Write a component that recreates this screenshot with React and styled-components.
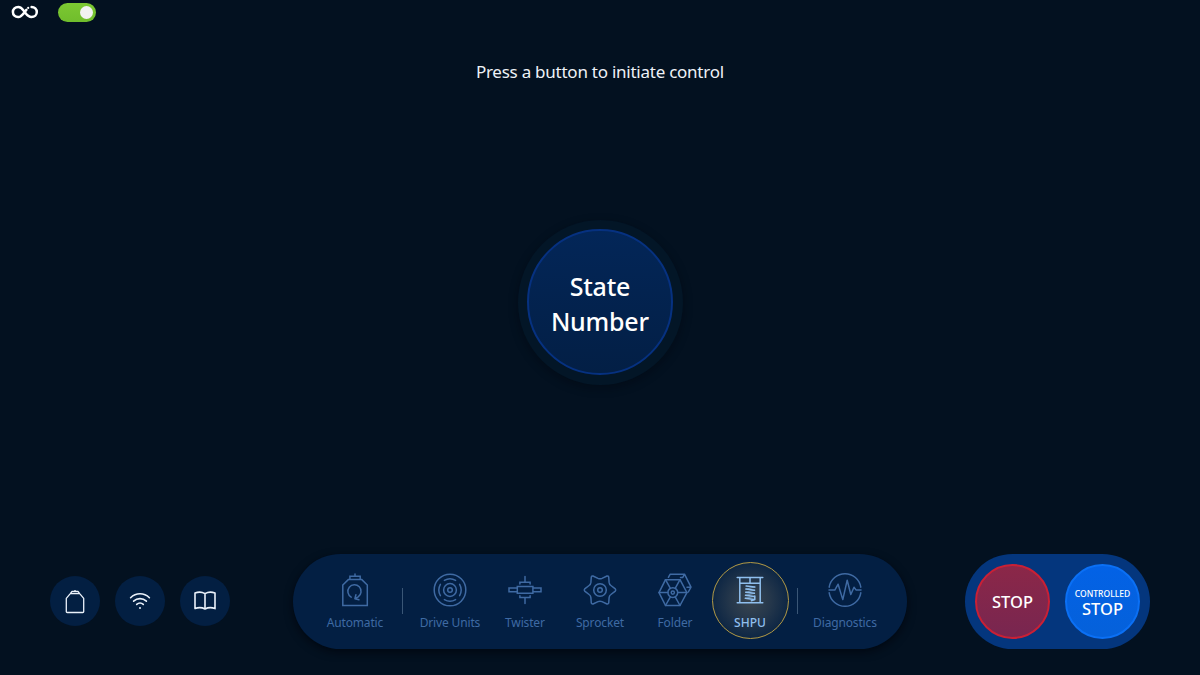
import React from 'react';
import styled, { createGlobalStyle } from 'styled-components';

const GlobalStyle = createGlobalStyle`
  *, *::before, *::after { box-sizing: border-box; }
  body {
    margin: 0;
    background: #031120;
    font-family: "Noto Sans", "Open Sans", sans-serif;
    color: #fff;
    overflow: hidden;
  }
  button { font: inherit; color: inherit; border: 0; padding: 0; margin: 0; background: none; cursor: pointer; }
  svg { display: block; overflow: visible; }
`;

const Screen = styled.div`
  width: 1200px;
  height: 675px;
  display: flex;
  flex-direction: column;
  align-items: center;
`;

const TopBar = styled.header`
  align-self: stretch;
  height: 24px;
  padding-left: 11px;
  display: flex;
  align-items: center;
  gap: 19px;
`;

const Toggle = styled.button`
  width: 38px;
  height: 19px;
  border-radius: 10px;
  background: linear-gradient(#7cc832, #70bd2c);
  display: flex;
  align-items: center;
  justify-content: flex-end;
  padding-right: 3px;
`;

const Knob = styled.span`
  width: 13px;
  height: 13px;
  border-radius: 50%;
  background: #f2f2f2;
`;

const Line = styled.span`
  display: block;
  white-space: nowrap;
  font-size: ${(p) => p.$size}px;
  line-height: ${(p) => p.$height}px;
  font-weight: ${(p) => p.$weight || 400};
  letter-spacing: ${(p) => p.$spacing || 0}px;
  margin-right: ${(p) => -(p.$spacing || 0)}px;
`;

const Prompt = styled.p`
  margin: 36px 0 0;
  height: 24px;
  color: #eef2f7;
`;

const Main = styled.main`
  flex: 1;
  padding-top: 135.5px;
`;

const Halo = styled.div`
  padding: 9.5px;
  border-radius: 50%;
  background: #031627;
  box-shadow: 0 3px 10px rgba(0, 4, 12, 0.4);
`;

const StateButton = styled.button`
  width: 146px;
  height: 146px;
  border-radius: 50%;
  border: 2px solid #063180;
  background: linear-gradient(#032658, #031f45);
  display: flex;
  flex-direction: column;
  align-items: center;
  justify-content: center;
  padding-top: 4px;
`;

const Footer = styled.footer`
  width: 1200px;
  height: 121px;
  padding: 0 50px;
  display: flex;
  align-items: flex-start;
  justify-content: space-between;
`;

const Shortcuts = styled.div`
  display: flex;
  gap: 15px;
  padding-top: 22px;
  width: 180px;
`;

const RoundButton = styled.button`
  width: 50px;
  height: 50px;
  border-radius: 50%;
  background: #031f42;
  display: flex;
  align-items: center;
  justify-content: center;
`;

const Nav = styled.nav`
  width: 614px;
  height: 95px;
  margin-left: 5px;
  padding-bottom: 2px;
  border-radius: 48px;
  background: #031f43;
  box-shadow: 0 3px 8px rgba(0, 4, 12, 0.7);
  display: flex;
  align-items: center;
  justify-content: center;
`;

const NavItem = styled.button`
  width: 75px;
  height: 77px;
  display: flex;
  flex-direction: column;
  align-items: center;
  padding-top: 11.4px;
  color: ${(p) => (p.$active ? '#8fbfee' : '#3f6aa3')};
  ${(p) => p.$active && `
    width: 77px;
    margin: 0 -1px;
    border-radius: 50%;
    border: 1px solid #b39a45;
    padding-top: 10.4px;
    background: radial-gradient(circle at 50% 50%, #3a454f 0%, #25374b 38%, #0d2644 72%);
  `}
`;

const NavLabel = styled.span`
  margin-top: 7.6px;
`;

const Divider = styled.span`
  width: 1px;
  height: 26px;
  margin: 0 10px 0 9px;
  background: #3a5676;
`;

const StopPod = styled.div`
  width: 185px;
  height: 95px;
  padding-bottom: 1px;
  border-radius: 48px;
  background: #04367d;
  display: flex;
  align-items: center;
  justify-content: center;
  gap: 15px;
`;

const StopButton = styled.button`
  width: 75px;
  height: 75px;
  border-radius: 50%;
  border: 2px solid ${(p) => (p.$hard ? '#c92035' : '#0b70f5')};
  background: ${(p) => (p.$hard ? 'linear-gradient(#8b2748, #782650)' : 'linear-gradient(#0362e6, #0561da)')};
  display: flex;
  flex-direction: column;
  align-items: center;
  justify-content: center;
  padding-top: ${(p) => (p.$hard ? 2 : 5)}px;
`;

const Glyph = ({ size = 34, w = 1.5, children }) => (
  <svg width={size} height={size} viewBox="0 0 34 34" fill="none" stroke="currentColor" strokeWidth={w} strokeLinejoin="round" strokeLinecap="round">
    {children}
  </svg>
);

const LogoIcon = () => (
  <svg width="28" height="14" viewBox="0 0 28 14" fill="none" stroke="#fff" strokeWidth="2.5" strokeLinecap="round">
    <path d="M15.4 4.8C12.8 7.6 11 12 7.3 12.1C4.1 12.2 1.9 9.9 1.9 7C1.9 4.1 4.1 1.9 7.3 1.9C10.8 1.9 12 5 14 7.5C15.8 9.9 17.3 12.1 20.4 12.1C23.6 12.1 25.8 9.9 25.8 7C25.8 4.1 23.6 1.9 20.6 1.9" />
    <circle cx="17.2" cy="2.9" r="1.1" fill="#fff" stroke="none" />
  </svg>
);

const BottleIcon = () => (
  <svg width="20" height="25" viewBox="0 0 20 25" fill="none" stroke="#eaf1fa" strokeWidth="1.3" strokeLinejoin="round">
    <path d="M5.3 4.7L1.3 9.4V22.7Q1.3 23.5 2.2 23.5H17.8Q18.7 23.5 18.7 22.7V9.4L14.7 4.7ZM5.3 4.7L7 2.5H13L14.7 4.7M10 1V2.5" />
  </svg>
);

const WifiIcon = () => (
  <svg width="22" height="18" viewBox="0 0 22 18" fill="none" stroke="#eaf1fa" strokeWidth="1.6" strokeLinecap="round">
    <path d="M1.6 5.7C7 .4 15 .4 20.4 5.7M4.6 9.2C8.3 5.7 13.7 5.7 17.4 9.2M7.7 12.4C9.6 10.6 12.4 10.6 14.3 12.4" />
    <circle cx="11" cy="15.9" r="1" fill="#eaf1fa" stroke="none" />
  </svg>
);

const BookIcon = () => (
  <svg width="22" height="20" viewBox="0 0 22 20" fill="none" stroke="#eaf1fa" strokeWidth="1.6" strokeLinejoin="round">
    <path d="M11 2.6C8 .9 4 .9 1 2.1V17.6C4 16.4 8 16.4 11 18C14 16.4 18 16.4 21 17.6V2.1C18 .9 14 .9 11 2.6ZM11 2.6V18" />
  </svg>
);

const AutomaticIcon = () => (
  <Glyph>
    <path d="M10.3 6.6L4.8 12V32.6H29.3V12L23.8 6.6ZM11.9 6.4V3.3H22.2V6.4M17 1V3.2" strokeLinejoin="miter" />
    <path d="M13.2 24.1A6.6 6.6 0 1 1 20.2 23.8L17.6 25.4M17.9 21.8L16.9 25.7L20.9 26.8" />
  </Glyph>
);

const DriveIcon = () => (
  <Glyph>
    <circle cx="17" cy="17" r="15.8" />
    <circle cx="17" cy="17" r="6.4" />
    <circle cx="17" cy="17" r="2.3" />
    <path d="M11.4 7.4A11.2 11.2 0 0 1 22.6 7.4M11.4 26.6A11.2 11.2 0 0 0 22.6 26.6M7.4 11.4A11.2 11.2 0 0 0 7.4 22.6M26.6 11.4A11.2 11.2 0 0 1 26.6 22.6" />
  </Glyph>
);

const TwisterIcon = () => (
  <Glyph>
    <path d="M9.3 13.4H24.9V20.2H9.3ZM1 14.9H9.3V18.8H1ZM24.9 14.9H33V18.8H24.9ZM17 3.4V9.2M11.9 11V9.2H22.1V11M17 24.6V30.4M11.9 22.8V24.6H22.1V22.8" strokeLinejoin="miter" />
  </Glyph>
);

const SprocketIcon = () => (
  <Glyph>
    <path d="M8.3 3.9Q8.7 2.7 10 3L15 5.4Q17 6.3 19 5.4L24 3Q25.3 2.7 25.7 3.9L26.1 9.4Q26.3 11.4 27.9 12.5L32.3 15.9Q33.2 17 32.3 18.1L27.9 21.5Q26.3 22.6 26.1 24.6L25.7 30.1Q25.3 31.3 24 31L19 28.6Q17 27.7 15 28.6L10 31Q8.7 31.3 8.3 30.1L7.9 24.6Q7.7 22.6 6.1 21.5L1.7 18.1Q.8 17 1.7 15.9L6.1 12.5Q7.7 11.4 7.9 9.4Z" />
    <circle cx="17" cy="17" r="6.3" />
    <circle cx="17" cy="17" r="2.3" />
  </Glyph>
);

const FolderIcon = () => (
  <Glyph>
    <path d="M7.5 6.7H22L28.9 19.6L22 32.5H7.5L1 19.6Z" />
    <circle cx="14.8" cy="19.6" r="4.9" />
    <circle cx="14.8" cy="19.6" r="1.6" />
    <path d="M7.5 6.7L12.4 15.3M22 6.7L17.2 15.3M1 19.6H9.9M19.7 19.6H28.9M7.5 32.5L12.4 23.9M22 32.5L17.2 23.9M10.4 4.3L12.2 1.2H26.5L33 14.2L30.3 19M26.5 1.2L24.8 4.4M22.5 4.6H24.8M29 14.2H33" />
  </Glyph>
);

const ShpuIcon = () => (
  <Glyph>
    <path d="M4.2 4.4H29.8M4.2 29.8H29.8M6.8 4.4V29.8M27.2 4.4V29.8M6.8 10.2H27.2M17 4.4V10.2" />
    <path d="M13.1 13L21.8 14.1M12.9 16.1L21.6 17.2M12.7 19.2L21.4 20.3M12.5 22.3L21.2 23.4M12.3 25.3L21 26.4M21.8 23V26.6L18.4 27.7" />
    <path d="M21.8 14.1L12.9 16.1M21.6 17.2L12.7 19.2M21.4 20.3L12.5 22.3M21.2 23.4L12.3 25.3" strokeWidth="0.6" />
  </Glyph>
);

const DiagnosticsIcon = () => (
  <Glyph>
    <path d="M1.2 14.2A16 16 0 0 1 32.8 14.2M32.8 19.8A16 16 0 0 1 1.2 19.8" />
    <path d="M1 17.1H6.8L10.1 11.2L14.8 26.6L19.2 7.2L22.8 21.5L26 14.3L28.2 17.1H33" />
  </Glyph>
);

const items = [
  { label: 'Automatic', Icon: AutomaticIcon },
  null,
  { label: 'Drive Units', Icon: DriveIcon },
  { label: 'Twister', Icon: TwisterIcon },
  { label: 'Sprocket', Icon: SprocketIcon },
  { label: 'Folder', Icon: FolderIcon },
  { label: 'SHPU', Icon: ShpuIcon, active: true },
  null,
  { label: 'Diagnostics', Icon: DiagnosticsIcon },
];

export default function App() {
  return (
    <Screen>
      <GlobalStyle />
      <TopBar>
        <LogoIcon />
        <Toggle aria-label="Power"><Knob /></Toggle>
      </TopBar>
      <Prompt><Line $size={17} $height={24} $spacing={-0.25}>Press a button to initiate control</Line></Prompt>
      <Main>
        <Halo>
          <StateButton>
            <Line $size={25} $height={35} $weight={500} $spacing={-0.2}>State</Line>
            <Line $size={25} $height={35} $weight={500} $spacing={-0.2}>Number</Line>
          </StateButton>
        </Halo>
      </Main>
      <Footer>
        <Shortcuts>
          <RoundButton aria-label="Container"><BottleIcon /></RoundButton>
          <RoundButton aria-label="Network"><WifiIcon /></RoundButton>
          <RoundButton aria-label="Manual"><BookIcon /></RoundButton>
        </Shortcuts>
        <Nav>
          {items.map((item, i) =>
            item ? (
              <NavItem key={item.label} $active={item.active}>
                <item.Icon />
                <NavLabel>
                  <Line $size={12} $height={16} $spacing={item.active ? 0 : -0.15} $weight={item.active ? 500 : 400}>{item.label}</Line>
                </NavLabel>
              </NavItem>
            ) : (
              <Divider key={i} />
            )
          )}
        </Nav>
        <StopPod>
          <StopButton $hard><Line $size={16.5} $height={20} $weight={500}>STOP</Line></StopButton>
          <StopButton>
            <Line $size={8.5} $height={11} $weight={500}>CONTROLLED</Line>
            <Line $size={16.5} $height={20} $weight={500}>STOP</Line>
          </StopButton>
        </StopPod>
      </Footer>
    </Screen>
  );
}
